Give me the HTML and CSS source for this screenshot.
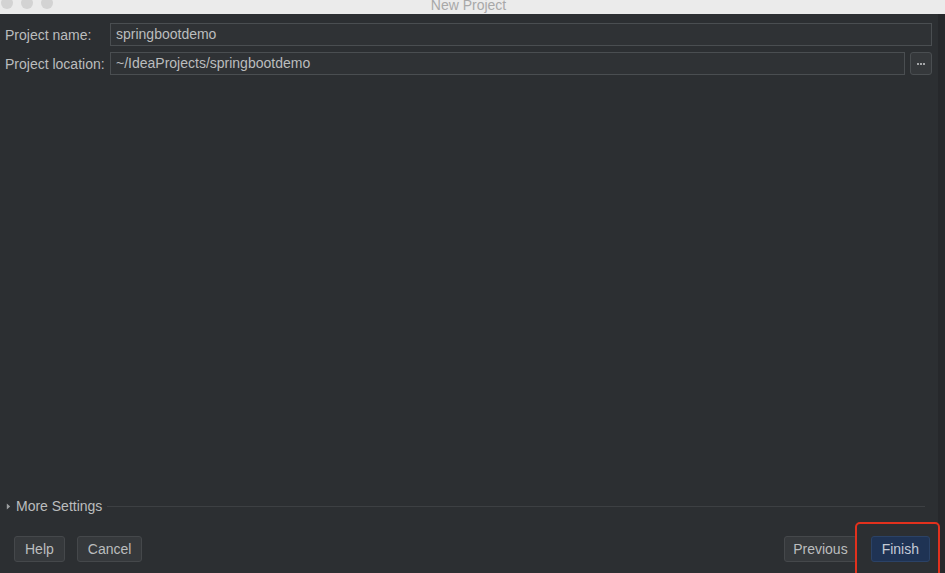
FILE: index.html
```html
<!DOCTYPE html>
<html lang="en">
  <head>
    <meta charset="UTF-8" />
    <title>New Project</title>
    <link rel="stylesheet" href="styles.css">
  </head>
  <body>
    <div class="window">
      <div class="titlebar">
        <div class="lights">
          <span class="light"></span>
          <span class="light"></span>
          <span class="light"></span>
        </div>
        <div class="title">New Project</div>
      </div>
      <div class="dialog">
        <div class="form">
          <label class="label">Project name:</label>
          <div class="field">springbootdemo</div>
          <label class="label">Project location:</label>
          <div class="field-row">
            <div class="field">~/IdeaProjects/springbootdemo</div>
            <div class="browse"><i></i><i></i><i></i></div>
          </div>
        </div>
        <div class="spacer"></div>
        <div class="more">
          <svg class="arrow" viewBox="0 0 6 8"><path d="M1 0.5 L5 4 L1 7.5 Z" fill="currentColor"/></svg>
          <span>More Settings</span>
          <div class="rule"></div>
        </div>
        <div class="footer">
          <div class="group">
            <button class="btn">Help</button>
            <button class="btn">Cancel</button>
          </div>
          <div class="group">
            <button class="btn narrow">Previous</button>
            <button class="btn primary">Finish</button>
          </div>
        </div>
      </div>
      <div class="highlight"></div>
    </div>
  </body>
</html>
```

FILE: styles.css
```css
:root {
  --bg: #2c2f32;
  --text: #bbbdbe;
  --border: #4a4e51;
  --field: #2f3235;
}

html, body {
  margin: 0;
  height: 100%;
  background: var(--bg);
  overflow: hidden;
}

body {
  font-family: "Liberation Sans", Arial, sans-serif;
  font-size: 14px;
  color: var(--text);
}

.window {
  position: relative;
  display: flex;
  flex-direction: column;
  height: 100%;
}

.titlebar {
  position: relative;
  height: 14px;
  background: #ebebeb;
  flex: none;
  overflow: hidden;
}

.lights {
  display: flex;
  gap: 8px;
  padding-left: 1px;
  margin-top: -3px;
}

.light {
  width: 12px;
  height: 12px;
  border-radius: 50%;
  background: #d3d3d3;
}

.title {
  position: absolute;
  left: 0;
  right: 8px;
  top: -3px;
  text-align: center;
  color: #a8a8a8;
  font-size: 14px;
}

.dialog {
  flex: 1;
  display: flex;
  flex-direction: column;
  padding: 9px 6px 11px 5px;
  margin-right: 7px;
  box-shadow: 7px 0 0 #26282b;
}

.form {
  display: grid;
  grid-template-columns: 105px 1fr;
  row-gap: 6px;
  align-items: center;
}

.label {
  color: var(--text);
}

.field-row {
  display: flex;
  gap: 5px;
}

.field {
  flex: 1;
  height: 21px;
  line-height: 21px;
  padding: 0 5px;
  border: 1px solid var(--border);
  background: var(--field);
  color: var(--text);
}

.browse {
  width: 20px;
  height: 21px;
  border: 1px solid var(--border);
  border-radius: 3px;
  background: #35383b;
  display: flex;
  align-items: center;
  justify-content: center;
  gap: 1px;
}

.browse i {
  width: 2px;
  height: 2px;
  background: #a4a6a8;
}

.spacer {
  flex: 1;
}

.more {
  display: flex;
  align-items: center;
  gap: 5px;
  padding-left: 1px;
  margin-bottom: 22px;
}

.arrow {
  width: 5px;
  height: 7px;
  color: #9c9ea0;
}

.rule {
  flex: 1;
  height: 1px;
  background: #3d4043;
  margin: 0 7px 0 0;
}

.footer {
  display: flex;
  justify-content: space-between;
  padding: 0 2px 0 9px;
}

.group {
  display: flex;
  gap: 12px;
}

.group + .group {
  gap: 14px;
}

.btn {
  height: 26px;
  padding: 0 10px;
  font-family: inherit;
  font-size: 14px;
  color: var(--text);
  background: #36393c;
  border: 1px solid #45484b;
  border-radius: 3px;
}

.narrow {
  padding: 0 8px;
}

.primary {
  background: #1f3354;
  border-color: #2b4266;
  color: #c3cad6;
}

.highlight {
  position: absolute;
  left: 855px;
  top: 522px;
  width: 81px;
  height: 60px;
  border: 2px solid #e2311d;
  border-radius: 5px;
}
```
